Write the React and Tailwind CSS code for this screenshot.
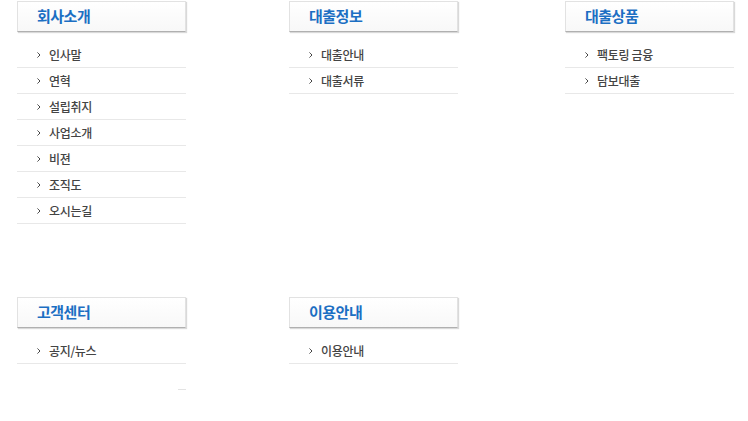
import React from 'react';

const sections = [
  { title: '회사소개', items: ['인사말', '연혁', '설립취지', '사업소개', '비젼', '조직도', '오시는길'] },
  { title: '대출정보', items: ['대출안내', '대출서류'] },
  { title: '대출상품', items: ['팩토링 금융', '담보대출'] },
  { title: '고객센터', items: ['공지/뉴스'], tail: true },
  { title: '이용안내', items: ['이용안내'] },
];

const Bullet = () => (
  <svg width="4" height="6" viewBox="0 0 4 6" className="shrink-0">
    <rect x="0" y="0" width="1" height="1" fill="#999" />
    <rect x="1" y="1" width="1" height="1" fill="#555" />
    <rect x="2" y="2" width="1" height="2" fill="#444" />
    <rect x="1" y="4" width="1" height="1" fill="#555" />
    <rect x="0" y="5" width="1" height="1" fill="#999" />
  </svg>
);

const Menu = ({ section }) => (
  <div className="w-[169px]">
    {/* Header box */}
    <div className="h-[31px] border border-[#e2e2e2] border-b-[#b0b0b0] bg-gradient-to-b from-white to-[#f8f8f8] shadow-[1px_1px_1px_rgba(0,0,0,0.15)] flex items-center pl-[19px]">
      <span className="text-[15px] font-bold text-[#1c6fc3] tracking-[-0.5px]">{section.title}</span>
    </div>

    {/* Items */}
    <ul className="mt-[10px]">
      {section.items.map((item) => (
        <li
          key={item}
          className="h-[26px] border-b border-[#e8e8e8] flex items-center pl-[20px] gap-[8px] text-[12px] font-medium text-[#444] tracking-[-0.3px]"
        >
          <Bullet />
          <span>{item}</span>
        </li>
      ))}
    </ul>

    {section.tail && (
      <div className="flex justify-end mt-[25px]">
        <div className="w-[8px] h-px bg-[#e3e3e3]" />
      </div>
    )}
  </div>
);

export default function App() {
  return (
    <div
      className="w-[748px] h-[421px] bg-white overflow-hidden pt-px pl-[17px]"
      style={{ fontFamily: '"Noto Sans CJK KR", "Noto Sans", sans-serif' }}
    >
      <div className="flex h-[296px]">
        <div className="w-[272px]"><Menu section={sections[0]} /></div>
        <div className="w-[276px]"><Menu section={sections[1]} /></div>
        <div><Menu section={sections[2]} /></div>
      </div>
      <div className="flex">
        <div className="w-[272px]"><Menu section={sections[3]} /></div>
        <div><Menu section={sections[4]} /></div>
      </div>
    </div>
  );
}
